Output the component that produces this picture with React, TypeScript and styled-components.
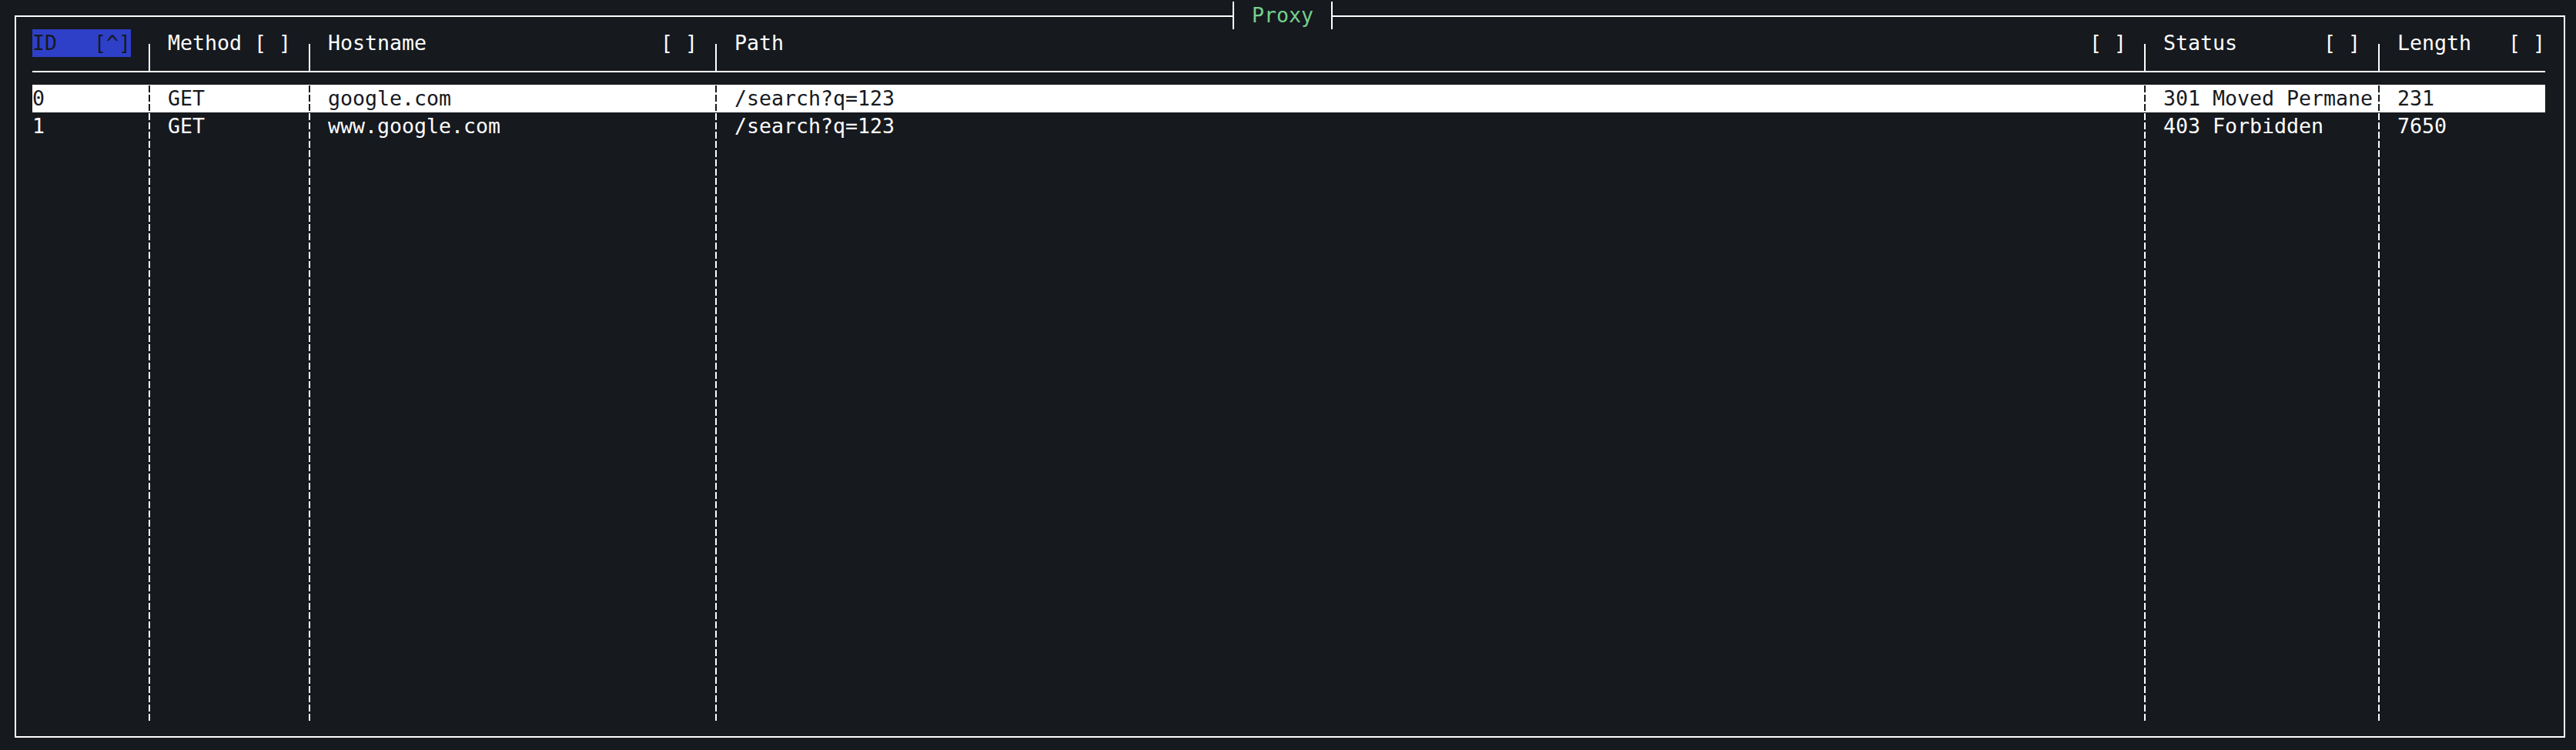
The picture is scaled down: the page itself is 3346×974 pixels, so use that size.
import {Fragment} from 'react';
import styled, {createGlobalStyle} from 'styled-components';

// terminal grid: one cell is 16px wide and 36px tall
const CELL = 16;
const BG = '#16191e';
const FG = '#ffffff';

const GlobalStyle = createGlobalStyle`
  html, body {
    margin: 0;
    padding: 0;
    background: ${BG};
    overflow: hidden;
  }

  body {
    font-family: "DejaVu Sans Mono", "Liberation Mono", monospace;
    font-size: 26.58px;
    line-height: 36px;
    color: ${FG};
  }
`;

const Screen = styled.div`
  width: 3346px;
  height: 974px;
  padding: 20px 0 0 19px;
  box-sizing: border-box;
`;

const Frame = styled.section`
  position: relative;
  width: 3313px;
  height: 938px;
  box-sizing: border-box;
  border: 2px solid ${FG};
  padding: 16px 24px 18px 21px;
  display: flex;
  flex-direction: column;
`;

const Title = styled.div`
  position: absolute;
  top: -20px;
  left: 1580px;
  width: 130px;
  height: 36px;
  box-sizing: border-box;
  border-left: 2px solid ${FG};
  border-right: 2px solid ${FG};
  background: ${BG};
  color: #74d08e;
  text-align: center;
  white-space: pre;
`;

const TableHead = styled.div<{ $template: string }>`
  display: grid;
  grid-template-columns: ${p => p.$template};
  grid-template-rows: 36px 36px;
  height: 72px;
`;

const HeadCell = styled.div<{ $col: number; $last: boolean }>`
  grid-row: 1;
  grid-column: ${p => p.$col};
  padding-right: ${p => (p.$last ? 0 : CELL)}px;
  white-space: pre;
`;

const HeadLabel = styled.div<{ $active: boolean }>`
  display: flex;
  justify-content: space-between;
  height: 36px;
  background: ${p => (p.$active ? '#2e40c8' : 'transparent')};
  color: ${p => (p.$active ? BG : FG)};
`;

const HeadSep = styled.div<{ $col: number }>`
  grid-row: 1 / span 2;
  grid-column: ${p => p.$col};
  background: linear-gradient(${FG}, ${FG}) no-repeat 7px 19px / 2px 36px;
`;

const Divider = styled.div`
  grid-column: 1 / -1;
  grid-row: 2;
  align-self: center;
  height: 2px;
  margin-top: 1px;
  background: ${FG};
`;

const TableBody = styled.div`
  flex: 1;
  display: flex;
  flex-direction: column;
`;

const Row = styled.div<{ $template: string; $selected?: boolean }>`
  display: grid;
  grid-template-columns: ${p => p.$template};
  height: 36px;
  background: ${p => (p.$selected ? FG : 'transparent')};
  color: ${p => (p.$selected ? BG : FG)};
`;

const Filler = styled(Row)`
  flex: 1;
  height: auto;
`;

const Cell = styled.div`
  white-space: pre;
  overflow: hidden;
`;

const DashSep = styled.div<{ $selected?: boolean }>`
  background-image: repeating-linear-gradient(
    to bottom,
    ${p => (p.$selected ? BG : FG)} 0 9px,
    transparent 9px 12px
  );
  background-size: 2px 100%;
  background-position: 7px 1px;
  background-repeat: no-repeat;
`;

type Request = {
  id: string;
  method: string;
  hostname: string;
  path: string;
  status: string;
  length: string;
};

type Column = {
  key: keyof Request;
  title: string;
  width: number;
  sort: string;
};

const columns: Column[] = [
  {key: 'id', title: 'ID', width: 9, sort: '[^]'},
  {key: 'method', title: 'Method', width: 11, sort: '[ ]'},
  {key: 'hostname', title: 'Hostname', width: 31, sort: '[ ]'},
  {key: 'path', title: 'Path', width: 114, sort: '[ ]'},
  {key: 'status', title: 'Status', width: 17, sort: '[ ]'},
  {key: 'length', title: 'Length', width: 12, sort: '[ ]'},
];

const requests: Request[] = [
  {id: '0', method: 'GET', hostname: 'google.com', path: '/search?q=123', status: '301 Moved Permanently', length: '231'},
  {id: '1', method: 'GET', hostname: 'www.google.com', path: '/search?q=123', status: '403 Forbidden', length: '7650'},
];

const template = columns.map(c => `${c.width * CELL}px`).join(` ${CELL * 2}px `);

const App = () => {
  const selected = 0;

  return (
    <>
      <GlobalStyle />
      <Screen>
        <Frame>
          <Title>Proxy</Title>
          <TableHead $template={template}>
            {columns.map((col, i) => (
              <Fragment key={col.key}>
                {i > 0 && <HeadSep $col={i * 2} />}
                <HeadCell $col={i * 2 + 1} $last={i === columns.length - 1}>
                  <HeadLabel $active={col.key === 'id'}>
                    <span>{col.title}</span>
                    <span>{col.sort}</span>
                  </HeadLabel>
                </HeadCell>
              </Fragment>
            ))}
            <Divider />
          </TableHead>
          <TableBody>
            {requests.map((req, index) => (
              <Row key={req.id} $template={template} $selected={index === selected}>
                {columns.map((col, i) => (
                  <Fragment key={col.key}>
                    {i > 0 && <DashSep $selected={index === selected} />}
                    <Cell>{req[col.key].slice(0, col.width)}</Cell>
                  </Fragment>
                ))}
              </Row>
            ))}
            <Filler $template={template}>
              {columns.map((col, i) => (
                <Fragment key={col.key}>
                  {i > 0 && <DashSep />}
                  <Cell />
                </Fragment>
              ))}
            </Filler>
          </TableBody>
        </Frame>
      </Screen>
    </>
  );
};

export default App;
